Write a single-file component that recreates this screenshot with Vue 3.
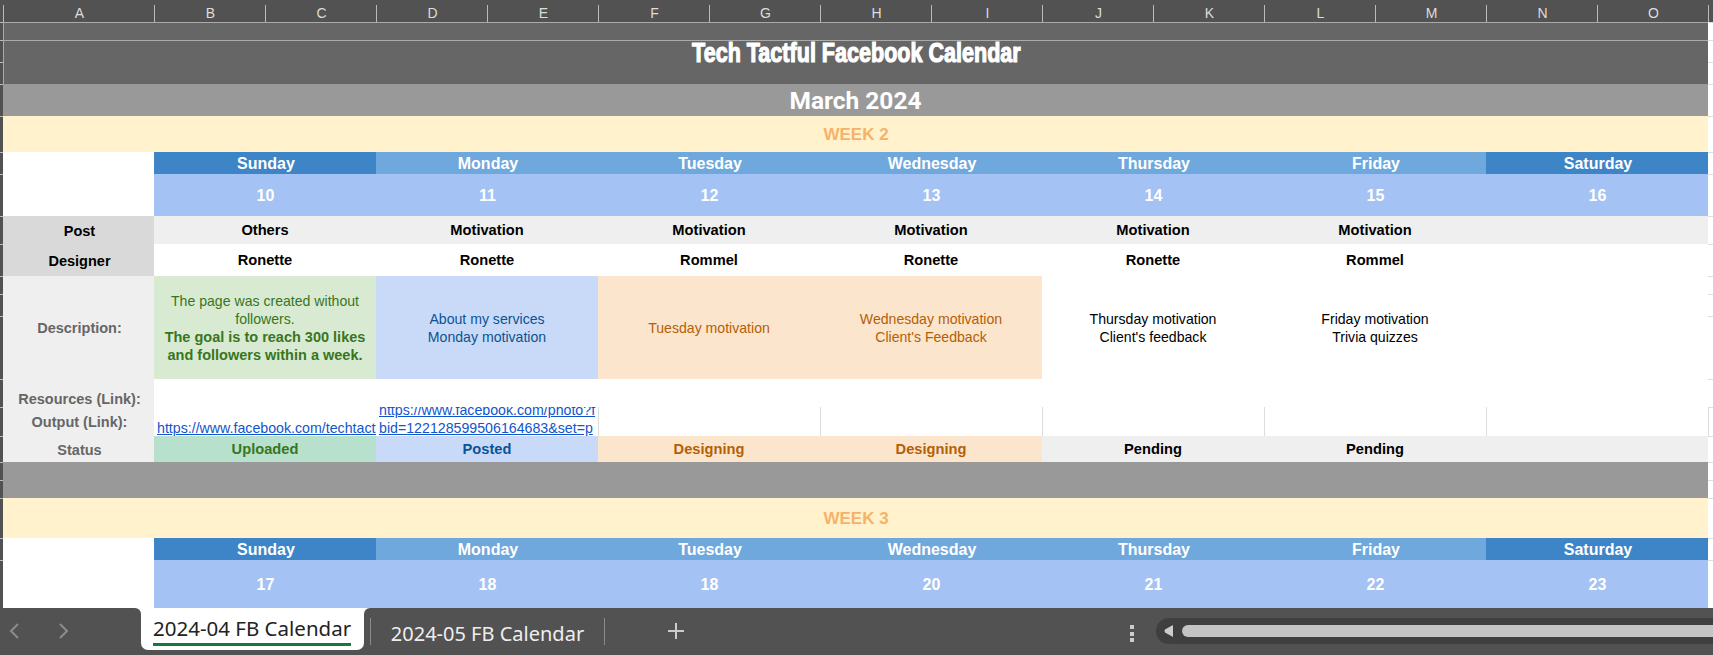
<script setup>
const letters = ["B","C","D","E","F","G","H","I","J","K","L","M","N","O"];
const days = [
  { name: "Sunday", end: true },
  { name: "Monday" },
  { name: "Tuesday" },
  { name: "Wednesday" },
  { name: "Thursday" },
  { name: "Friday" },
  { name: "Saturday", end: true },
];
const dates2 = [10, 11, 12, 13, 14, 15, 16];
const dates3 = [17, 18, 18, 20, 21, 22, 23];

const posts = ["Others", "Motivation", "Motivation", "Motivation", "Motivation", "Motivation", ""];
const designers = ["Ronette", "Ronette", "Rommel", "Ronette", "Ronette", "Rommel", ""];

const statuses = [
  { text: "Uploaded", cls: "st-green" },
  { text: "Posted", cls: "st-blue" },
  { text: "Designing", cls: "st-orange" },
  { text: "Designing", cls: "st-orange" },
  { text: "Pending", cls: "st-grey" },
  { text: "Pending", cls: "st-grey" },
  { text: "", cls: "st-grey" },
];
</script>

<template>
  <div class="screen">
    <div class="sheet">
      <!-- column letters -->
      <div class="head">
        <div class="gut-head"></div>
        <div class="letter first">A</div>
        <div v-for="l in letters" :key="l" class="letter">{{ l }}</div>
        <div class="letter"></div>
      </div>

      <!-- title block -->
      <div class="gut"></div>
      <div class="band dark ruled s15"></div>
      <div class="mar"></div>

      <div class="gut"></div>
      <div class="band dark ruled title s15 r2"><span>Tech Tactful Facebook Calendar</span></div>
      <div class="mar"></div>
      <div class="gut"></div>
      <div class="mar"></div>

      <div class="gut"></div>
      <div class="band grey month s15">March 2024</div>
      <div class="mar"></div>

      <div class="gut"></div>
      <div class="band cream week s15">WEEK 2</div>
      <div class="mar"></div>

      <!-- week 2 -->
      <div class="gut"></div>
      <div class="blank"></div>
      <div v-for="d in days" :key="d.name" class="day s2" :class="{ end: d.end }">{{ d.name }}</div>
      <div class="mar"></div>

      <div class="gut"></div>
      <div class="blank"></div>
      <div v-for="(n, i) in dates2" :key="i" class="date s2">{{ n }}</div>
      <div class="mar"></div>

      <div class="gut"></div>
      <div class="label strong nudge">Post</div>
      <div v-for="(p, i) in posts" :key="i" class="cell post s2">{{ p }}</div>
      <div class="mar"></div>

      <div class="gut"></div>
      <div class="label strong nudge">Designer</div>
      <div v-for="(p, i) in designers" :key="i" class="cell s2">{{ p }}</div>
      <div class="mar"></div>

      <div class="gut"></div>
      <div class="label r3">Description:</div>
      <div class="desc s2 r3 d-green">
        <p>The page was created without followers.</p>
        <p class="goal">The goal is to reach 300 likes and followers within a week.</p>
      </div>
      <div class="desc s2 r3 d-blue"><p>About my services</p><p>Monday motivation</p></div>
      <div class="desc s2 r3 d-orange"><p>Tuesday motivation</p></div>
      <div class="desc s2 r3 d-orange"><p>Wednesday motivation</p><p>Client's Feedback</p></div>
      <div class="desc s2 r3"><p>Thursday motivation</p><p>Client's feedback</p></div>
      <div class="desc s2 r3"><p>Friday motivation</p><p>Trivia quizzes</p></div>
      <div class="desc s2 r3"></div>
      <div class="mar"></div>
      <div class="gut"></div>
      <div class="mar"></div>
      <div class="gut"></div>
      <div class="mar"></div>

      <div class="gut"></div>
      <div class="label low">Resources (Link):</div>
      <div class="blank s14"></div>
      <div class="mar"></div>

      <div class="gut"></div>
      <div class="label">Output (Link):</div>
      <div class="link s2"><div><a href="#">https://www.facebook.com/techtactf</a></div></div>
      <div class="link s2">
        <div>
          <a href="#">https://www.facebook.com/photo?f</a><br />
          <a href="#">bid=122128599506164683&amp;set=p</a>
        </div>
      </div>
      <div class="out s2"></div>
      <div class="out s2"></div>
      <div class="out s2"></div>
      <div class="out s2"></div>
      <div class="out s2"></div>
      <div class="mar out"></div>

      <div class="gut"></div>
      <div class="label nudge">Status</div>
      <div v-for="(s, i) in statuses" :key="i" class="cell s2" :class="s.cls">{{ s.text }}</div>
      <div class="mar"></div>

      <!-- spacer between weeks -->
      <div class="gut"></div>
      <div class="band grey s15 r2"></div>
      <div class="mar"></div>
      <div class="gut"></div>
      <div class="mar"></div>

      <!-- week 3 -->
      <div class="gut"></div>
      <div class="band cream week s15">WEEK 3</div>
      <div class="mar"></div>

      <div class="gut"></div>
      <div class="blank"></div>
      <div v-for="d in days" :key="d.name" class="day s2" :class="{ end: d.end }">{{ d.name }}</div>
      <div class="mar"></div>

      <div class="gut"></div>
      <div class="blank"></div>
      <div v-for="(n, i) in dates3" :key="i" class="date s2">{{ n }}</div>
      <div class="mar"></div>
    </div>

    <div class="tabbar">
      <div class="nav">
        <svg width="16" height="18" viewBox="0 0 16 18" class="chev"><path d="M11 2 4 9l7 7" /></svg>
        <svg width="16" height="18" viewBox="0 0 16 18" class="chev next"><path d="M5 2l7 7-7 7" /></svg>
      </div>
      <div class="tab active"><span>2024-04 FB Calendar</span></div>
      <div class="rest">
        <div class="sep"></div>
        <div class="tab other">2024-05 FB Calendar</div>
        <div class="sep"></div>
        <svg class="plus" width="18" height="18" viewBox="0 0 18 18"><path d="M9 1v16M1 9h16" /></svg>
        <div class="dots"><i></i><i></i><i></i></div>
        <div class="track">
          <svg width="9" height="12" viewBox="0 0 9 12"><path d="M9 0v12L1 7.5Q0 6 1 4.500z" /></svg>
          <div class="thumb"></div>
        </div>
      </div>
    </div>
  </div>
</template>

<style scoped>
.screen {
  width: 1713px;
  height: 655px;
  overflow: hidden;
  background: #fff;
  font-family: "Liberation Sans", Arial, sans-serif;
}

.sheet {
  display: grid;
  grid-template-columns: 3px 151px repeat(14, 111px) 5px;
  grid-template-rows: 22px 18px 22px 22px 32px 36px 22px 42px 28px 32px 18px 22px 63px 28px 29px 26px 18px 18px 40px 22px 48px;
  height: 608px;
}

.head {
  grid-column: 1 / -1;
  display: grid;
  grid-template-columns: subgrid;
  background: #525252;
  padding-top: 5px;
}
.gut-head { background: #525252; }
.letter {
  border-left: 1px solid #bbb;
  color: #ddd;
  font-size: 14px;
  line-height: 17px;
  text-align: center;
  padding-left: 1px;
}

.gut {
  background: #525252;
  border-top: 1px solid #bbb;
}
.mar { border-top: 1px solid #ddd; background: #fff; }
.mar.out { border-left: 1px solid #ddd; }

.s2 { grid-column: span 2; }
.s14 { grid-column: span 14; }
.s15 { grid-column: span 15; }
.r2 { grid-row: span 2; }
.r3 { grid-row: span 3; }

.band {
  display: flex;
  justify-content: center;
  align-items: center;
}
.dark { background: #666; }
.ruled { border-top: 1px solid #aaa; border-left: 1px solid #aaa; }
.grey { background: #999; }
.cream { background: #fff2cc; }

.title {
  align-items: flex-start;
  color: #fff;
  font-size: 28px;
  font-weight: 700;
  line-height: 24px;
}
/* the sheet uses a condensed heavy face, no such family is installed */
.title span {
  display: inline-block;
  white-space: nowrap;
  transform: scaleX(0.77);
  -webkit-text-stroke: 1.2px #fff;
}
.month {
  padding-top: 1px;
  color: #fff;
  font-family: Roboto, sans-serif;
  font-size: 24.500px;
  font-weight: 700;
}
.week {
  padding: 2px 0 0 1px;
  color: #f6b26b;
  font-size: 17px;
  font-weight: 700;
}

.blank { background: #fff; }

.day, .date, .cell, .label, .desc {
  display: flex;
  align-items: center;
  justify-content: center;
  text-align: center;
}
.day {
  padding: 2px 0 0 2px;
  background: #6fa8dc;
  color: #fff;
  font-size: 16px;
  font-weight: 700;
}
.day.end { background: #3d85c6; }
.date {
  padding: 1px 0 0 1px;
  background: #a4c2f4;
  color: #fff;
  font-size: 16px;
  font-weight: 700;
}

.cell {
  background: #fff;
  color: #000;
  font-size: 14.67px;
  font-weight: 700;
}
.post { background: #efefef; }

.label {
  padding-left: 2px;
  background: #efefef;
  color: #666;
  font-size: 14.5px;
  font-weight: 700;
}
.label.strong { background: #d9d9d9; color: #000; }
.label.low { align-items: flex-end; }
.label.nudge { padding-top: 2px; }

.desc {
  flex-direction: column;
  padding: 0 6px;
  background: #fff;
  color: #000;
  font-size: 14.1px;
  line-height: 18px;
}
.desc p { margin: 0; }
.desc .goal { font-size: 14.5px; font-weight: 700; }
.d-green { background: #d9ead3; color: #38761d; }
.d-blue { background: #c9daf8; color: #0b5394; }
.d-orange { background: #fce5cd; color: #b45f06; }

.link {
  display: flex;
  align-items: flex-end;
  overflow: hidden;
  padding: 0 3px;
  font-size: 14.2px;
  line-height: 18px;
  white-space: nowrap;
}
.link > div { margin-bottom: -1px; }
.link a { color: #1155cc; }
.out { border-left: 1px solid #ddd; }

.st-green { background: #b7e1cd; color: #38761d; }
.st-blue { background: #c9daf8; color: #0b5394; }
.st-orange { background: #fce5cd; color: #b45f06; }
.st-grey { background: #efefef; }

/* sheet tabs */
.tabbar {
  display: flex;
  height: 47px;
  background: linear-gradient(#fff 0 12px, #525252 12px);
  font-family: "Noto Sans", sans-serif;
}
.nav {
  display: flex;
  align-items: flex-start;
  width: 141px;
  padding: 14px 0 0 7px;
  box-sizing: border-box;
  background: #525252;
  border-top-right-radius: 6px;
}
.chev path { fill: none; stroke: #8c8c8c; stroke-width: 2; }
.chev.next { margin-left: 32px; }
.tab { font-size: 20px; white-space: nowrap; }
.active {
  width: 223px;
  height: 42px;
  box-sizing: border-box;
  padding: 6px 0 0 12px;
  background: #fff;
  border-radius: 0 0 7px 7px;
  color: #222;
  font-size: 20.500px;
}
.active span {
  display: block;
  width: 198px;
  line-height: 29px;
  text-align: center;
  border-bottom: 3px solid #107c41;
}
.rest {
  flex: 1;
  display: flex;
  align-items: flex-start;
  background: #525252;
  border-top-left-radius: 6px;
}
.sep {
  width: 1px;
  height: 27px;
  margin-top: 10px;
  background: #8a8a8a;
}
.rest > .sep:first-child { margin-left: 6px; }
.other {
  width: 233px;
  margin-top: 11px;
  color: #eee;
  line-height: 30px;
  text-align: center;
}
.plus { margin: 14px 0 0 62px; }
.plus path { fill: none; stroke: #ccc; stroke-width: 2; }
.dots {
  display: flex;
  flex-direction: column;
  gap: 2.500px;
  margin: 17px 22px 0 auto;
}
.dots i { display: block; width: 4px; height: 4px; background: #ccc; }
.track {
  display: flex;
  align-items: center;
  gap: 9px;
  width: 557px;
  height: 26px;
  margin-top: 10px;
  padding-left: 8px;
  box-sizing: border-box;
  background: #3f3f3f;
  border-radius: 13px 0 0 13px;
}
.track path { fill: #ccc; }
.thumb {
  flex: 1;
  height: 12px;
  background: #c4c4c4;
  border-radius: 6px 0 0 6px;
}
</style>
